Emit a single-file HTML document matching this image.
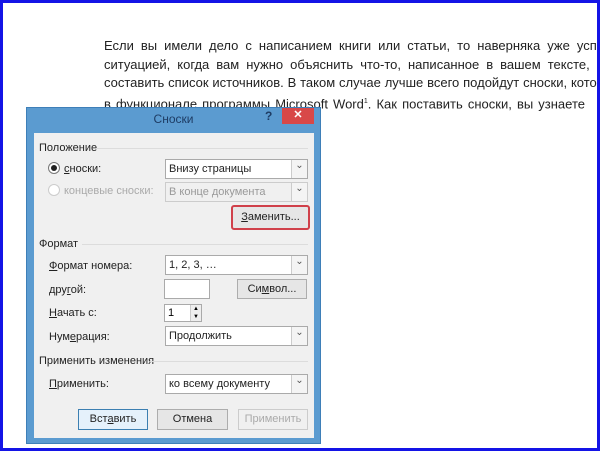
<!DOCTYPE html>
<html><head><meta charset="utf-8"><style>
*{box-sizing:border-box;margin:0;padding:0}
body{width:600px;height:451px;overflow:hidden;background:#fff;font-family:"Liberation Sans",sans-serif;position:relative}
.frame{position:absolute;left:0;top:0;width:600px;height:451px;border:3px solid #1414e6}
.doc{position:absolute;left:104px;top:37px;font-size:13px;color:#222;line-height:18.7px;white-space:nowrap}
.doc div{width:500px;text-align:justify;text-align-last:justify;white-space:normal;height:18.7px;overflow:hidden}
.dlg{position:absolute;left:26px;top:107px;width:295px;height:337px;background:#5b9bd0;border:1px solid #3e7fb8}
.title{position:absolute;left:0;top:0;width:100%;height:25px;text-align:center;font-size:12px;line-height:22px;color:#1e3c64}
.close{position:absolute;left:255px;top:0;width:32px;height:16px;background:#d84848;color:#fff;font-size:11px;text-align:center;line-height:15px;font-weight:bold}
.q{position:absolute;left:238px;top:1px;font-size:12px;color:#1e3c64;font-weight:bold}
.panel{position:absolute;left:7px;top:25px;width:280px;height:305px;background:#f0f0f0}
.a{position:absolute;font-size:11px;color:#222;line-height:14px}
.g{color:#aaa}
.hr{position:absolute;height:1px;background:#dcdcdc}
.cb{position:absolute;left:131px;width:143px;height:20px;background:#fff;border:1px solid #aaa;font-size:11px;line-height:18px;padding-left:3px;color:#222}
.cb:after{content:"⌄";position:absolute;right:0;top:0;width:15px;height:18px;border-left:1px solid #ccc;background:#f4f4f4;text-align:center;font-size:10px;line-height:12px;color:#555}
.btn{position:absolute;height:21px;background:#e6e6e6;border:1px solid #adadad;font-size:11px;text-align:center;line-height:19px;color:#222}
.rad{position:absolute;width:12px;height:12px;border-radius:50%;border:1px solid #777;background:#fff}
</style></head><body>
<div class="doc">
<div>Если вы имели дело с написанием книги или статьи, то наверняка уже успе</div>
<div>ситуацией, когда вам нужно объяснить что-то, написанное в вашем тексте, и</div>
<div>составить список источников. В таком случае лучше всего подойдут сноски, котор</div>
<div style="width:481px">в функционале программы Microsoft Word<sup style="font-size:7px">1</sup>. Как поставить сноски, вы узнаете</div>
</div>
<div class="dlg">
<div class="title">Сноски</div><div class="q">?</div><div class="close">✕</div>
<div class="panel">
<div class="a" style="left:5px;top:8px">Положение</div><div class="hr" style="left:62px;top:15px;width:212px"></div>
<div class="rad" style="left:14px;top:29px"><div style="position:absolute;left:2px;top:2px;width:6px;height:6px;border-radius:50%;background:#222"></div></div>
<div class="a" style="left:30px;top:29px"><u>с</u>носки:</div>
<div class="cb" style="top:26px">Внизу страницы</div>
<div class="rad" style="left:14px;top:51px;border-color:#ccc"></div>
<div class="a g" style="left:30px;top:51px">концевые сноски:</div>
<div class="cb g" style="top:49px;background:#f0f0f0;border-color:#ccc;color:#999">В конце документа</div>
<div class="btn" style="left:197px;top:72px;width:79px;height:25px;border:2px solid #d0404a;border-radius:3px;line-height:20px"><u>З</u>аменить...</div>
<div class="a" style="left:5px;top:104px">Формат</div><div class="hr" style="left:48px;top:111px;width:226px"></div>
<div class="a" style="left:15px;top:126px"><u>Ф</u>ормат номера:</div>
<div class="cb" style="top:122px">1, 2, 3, …</div>
<div class="a" style="left:15px;top:150px">дру<u>г</u>ой:</div>
<div style="position:absolute;left:130px;top:146px;width:46px;height:20px;background:#fff;border:1px solid #aaa"></div>
<div class="btn" style="left:203px;top:146px;width:70px;height:20px">Си<u>м</u>вол...</div>
<div class="a" style="left:15px;top:173px"><u>Н</u>ачать с:</div>
<div style="position:absolute;left:130px;top:171px;width:38px;height:18px;background:#fff;border:1px solid #aaa;font-size:11px;line-height:16px;padding-left:3px">1<div style="position:absolute;right:0;top:0;width:11px;height:16px;border-left:1px solid #ccc;background:#eee;font-size:6px;line-height:8px;text-align:center">▲<br>▼</div></div>
<div class="a" style="left:15px;top:197px">Нум<u>е</u>рация:</div>
<div class="cb" style="top:193px">Продолжить</div>
<div class="a" style="left:5px;top:221px">Применить изменения</div><div class="hr" style="left:116px;top:228px;width:158px"></div>
<div class="a" style="left:15px;top:244px"><u>П</u>рименить:</div>
<div class="cb" style="top:241px">ко всему документу</div>
<div class="btn" style="left:44px;top:276px;width:70px;border-color:#3c7fb1;background:#e5f1fb">Вст<u>а</u>вить</div>
<div class="btn" style="left:123px;top:276px;width:71px">Отмена</div>
<div class="btn" style="left:204px;top:276px;width:70px;color:#aaa;border-color:#ccc;background:#f0f0f0">Применить</div>
</div></div>
<div class="frame"></div>
</body></html>
